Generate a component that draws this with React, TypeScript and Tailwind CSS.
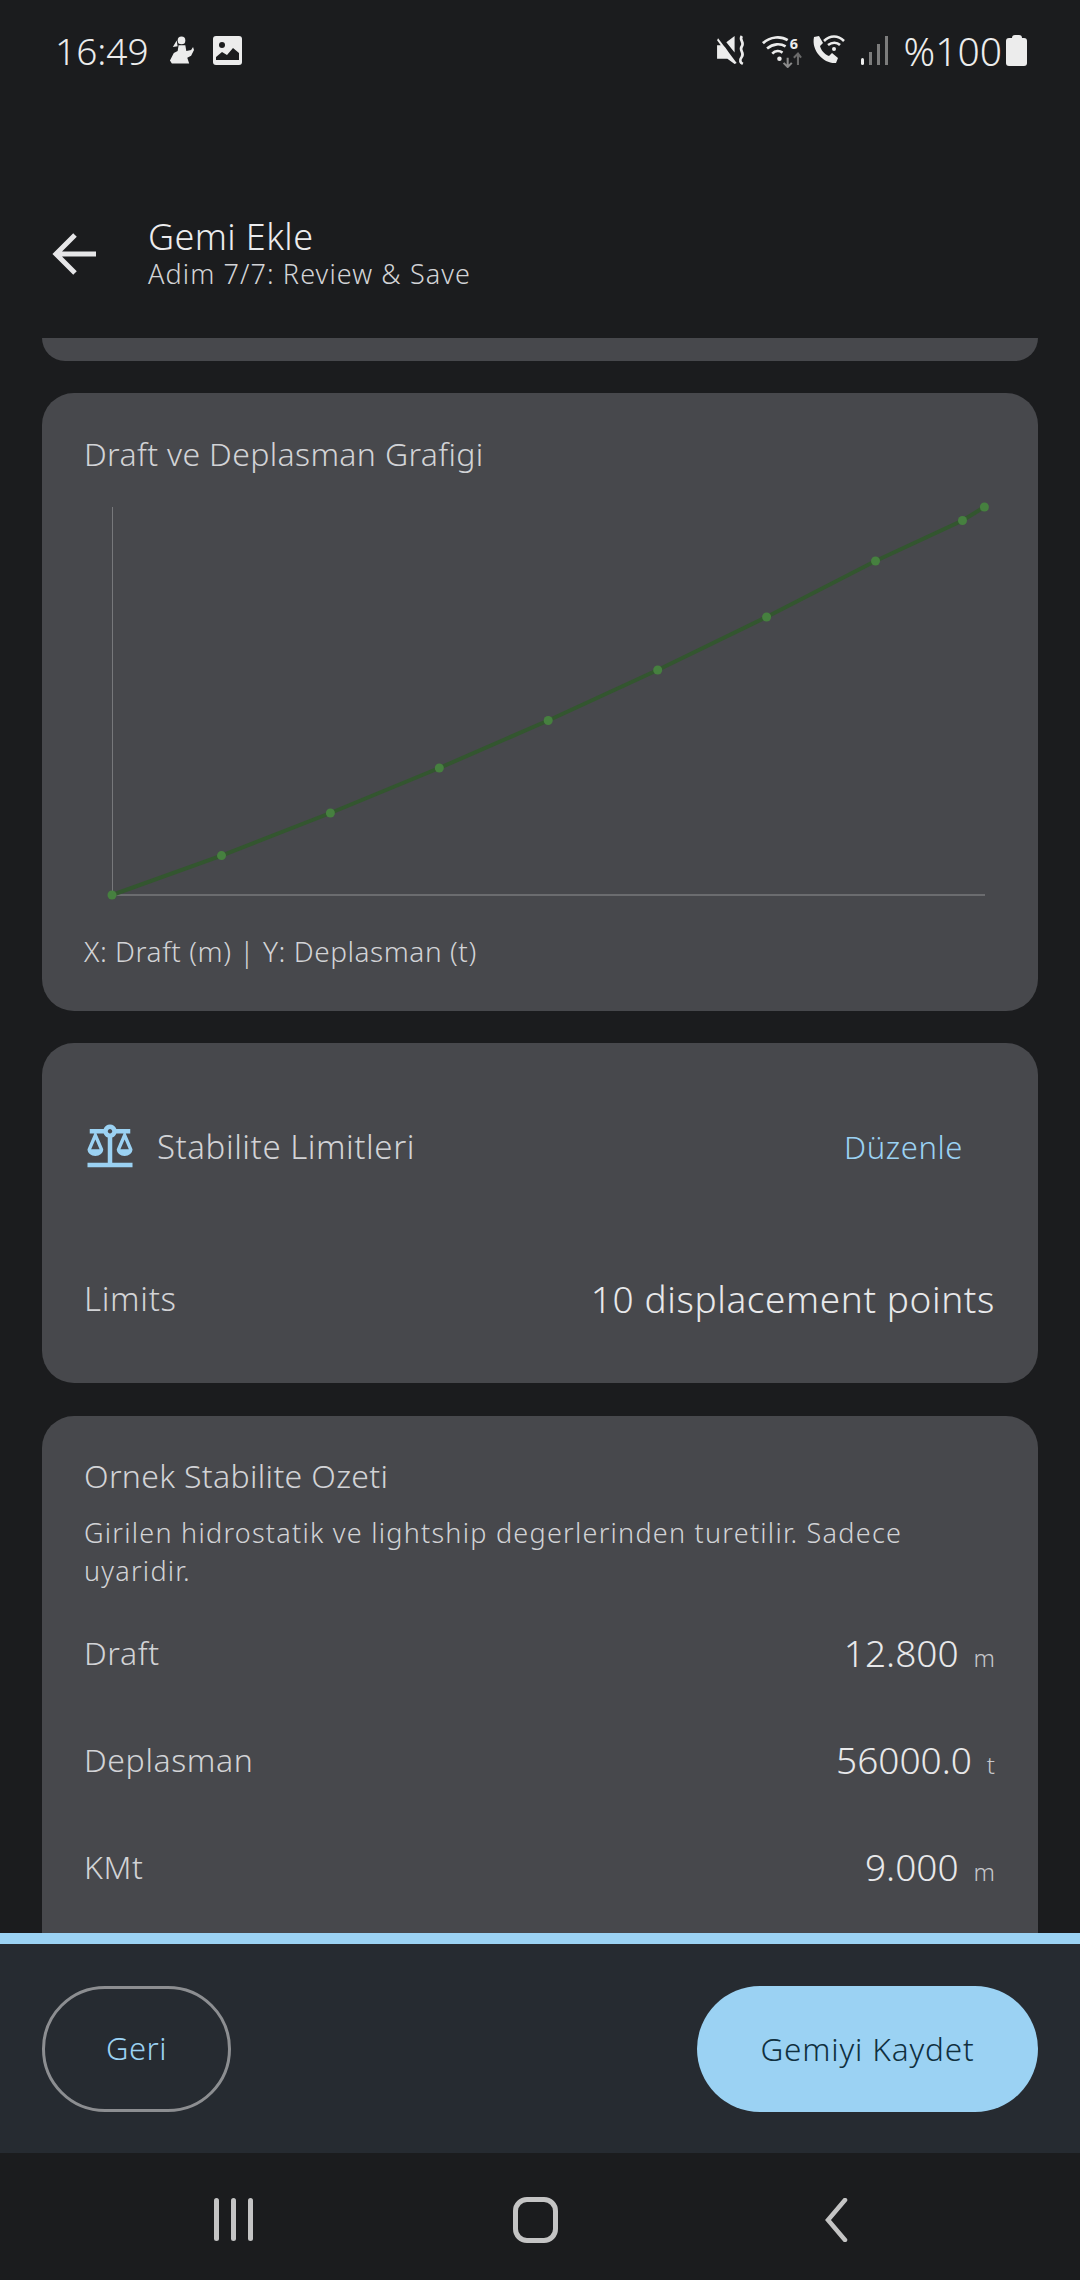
import React from "react";
import { MdBalance } from "react-icons/md";

const font = { fontFamily: '"Noto Sans", sans-serif' };

const points = [
  [0, 388],
  [109.5, 348.6],
  [218.4, 306],
  [327.3, 261],
  [436.2, 213.5],
  [545.7, 163],
  [654.6, 110],
  [763.5, 54],
  [850.5, 13.5],
  [872.4, 0],
];

const StatusBar = () => (
  <div className="flex h-[100px] shrink-0 items-center justify-between pl-[55px] pr-[53px]">
    <div className="flex items-center">
      <span className="text-[37px] leading-none font-light text-[#ececec]">16:49</span>
      <svg className="ml-[20px]" width="25" height="30" viewBox="0 0 26 30" fill="#ececec">
        <circle cx="13" cy="5" r="4" />
        <path d="M8 5 4 12l5-1zM10 10h7l1 6 5-1 2-3 1 3-3 6-4 2 2 6H3l-2-3 4-8 4-2z" />
      </svg>
      <svg className="ml-[19px] mt-[2px]" width="30" height="30" viewBox="0 0 30 30">
        <rect width="29" height="29" rx="3" fill="#ececec" />
        <circle cx="9" cy="9" r="3" fill="#1b1c1e" />
        <path d="M3 24v-3l6-5 5 3 6-7 6 5v7z" fill="#1b1c1e" />
      </svg>
    </div>
    <div className="flex items-center">
      <svg width="33" height="33" viewBox="0 0 30 32" fill="#ececec">
        <path d="M1 11h6l2 2 9 13v3l-7-5H1zM10 8l8-6v16zM2 4l18 24-2 1L1 6z" />
        <path d="M25 2c-3 4 3 6 0 10s3 6 0 10-1 6 1 7" fill="none" stroke="#ececec" strokeWidth="2.6" />
      </svg>
      <svg className="ml-[13px]" width="41" height="35" viewBox="0 0 38 34" fill="none">
        <path d="M1 10c7-7 18-7 24-3M5 15c6-5 13-5 18-2M10 20c3-3 7-3 10-1" stroke="#ececec" strokeWidth="2.6" />
        <circle cx="17" cy="25" r="2.2" fill="#ececec" />
        <text x="27" y="16" fontSize="14" fontWeight="700" fill="#ececec">6</text>
        <path d="M25 24v9M21 29l4 4 4-4" stroke="#8b8b8b" strokeWidth="2" />
        <path d="M35 31v-11M31 24l4-4 3 4" stroke="#6a6a6a" strokeWidth="2" />
      </svg>
      <svg className="ml-[9px]" width="34" height="30" viewBox="0 0 34 30" fill="none">
        <path d="M3 2 8 1l4 7-3 3c1 4 4 8 9 10l3-3 6 5-2 5c-12 1-25-12-22-26z" fill="#ececec" />
        <path d="M13 6c6-6 14-6 20 0M17 10c4-3 9-3 12 0" stroke="#ececec" strokeWidth="2.6" />
        <circle cx="23" cy="14" r="2" fill="#ececec" />
      </svg>
      <div className="ml-[16px] flex h-[30px] items-end gap-[5px]">
        <div className="h-[7px] w-[3px] rounded-full bg-[#ececec]" />
        <div className="h-[13px] w-[3px] bg-[#7c7c7c]" />
        <div className="h-[21px] w-[3px] bg-[#7c7c7c]" />
        <div className="h-[29px] w-[3px] bg-[#7c7c7c]" />
      </div>
      <span className="ml-[16px] text-[39px] leading-none font-light text-[#ececec]">%100</span>
      <div className="ml-[4px] flex flex-col items-center">
        <div className="h-[3px] w-[10px] rounded-t-sm bg-[#ececec]" />
        <div className="h-[28px] w-[21px] rounded-[3px] bg-[#ececec]" />
      </div>
    </div>
  </div>
);

const Row = ({ label, value, unit }: { label: string; value: string; unit: string }) => (
  <div className="flex h-[107px] items-center justify-between">
    <span className="text-[32px] font-light tracking-[0.6px] text-[#d2d3d6]">{label}</span>
    <div className="flex items-baseline gap-[15px]">
      <span className="text-[37px] font-light text-[#e8e8ea]">{value}</span>
      <span className="text-[24px] font-light text-[#c6c7cb]">{unit}</span>
    </div>
  </div>
);

export default function App() {
  return (
    <div className="flex h-[2280px] w-[1080px] flex-col overflow-hidden bg-[#1b1c1e]" style={font}>
      <StatusBar />

      <div className="flex h-[238px] shrink-0 items-start pt-[115px]">
        <svg className="ml-[52px] mt-[17px]" width="44" height="44" viewBox="0 0 44 44" fill="none" stroke="#e6e6e8" strokeWidth="5">
          <path d="M44 22H4M23 3 4 22l19 19" />
        </svg>
        <div className="ml-[52px]">
          <div className="text-[36px] leading-[44px] font-light tracking-[0.4px] text-[#ececee]">Gemi Ekle</div>
          <div className="text-[27px] leading-[30px] font-light tracking-[1.1px] text-[#d2d3d6]">Adim 7/7: Review &amp; Save</div>
        </div>
      </div>

      <div className="min-h-0 flex-1 overflow-hidden px-[42px]">
        <div className="h-[23px] rounded-b-[26px] bg-[#47484c]" />

        <div className="mt-[32px] h-[618px] rounded-[32px] bg-[#47484c] px-[42px] pt-[40px]">
          <div className="text-[32px] leading-[42px] font-light tracking-[0.35px] text-[#d2d3d6]">Draft ve Deplasman Grafigi</div>
          <div className="ml-[28px] mt-[32px] h-[389px] w-[873px]">
            <svg className="overflow-visible" width="873" height="389" viewBox="0 0 873 389" fill="none">
              <path d="M0.5 0V388" stroke="#77787b" strokeWidth="1" />
              <path d="M0 388H873" stroke="#77787b" strokeWidth="1.5" />
              <polyline points={points.map((p) => p.join(",")).join(" ")} stroke="#33562f" strokeWidth="4" />
              {points.map(([x, y]) => (
                <circle key={x} cx={x} cy={y} r="4.5" fill="#46803f" />
              ))}
            </svg>
          </div>
          <div className="mt-[37px] text-[28px] leading-[36px] font-light tracking-[0.55px] text-[#d2d3d6]">X: Draft (m) | Y: Deplasman (t)</div>
        </div>

        <div className="mt-[32px] h-[340px] rounded-[32px] bg-[#47484c] px-[42px]">
          <div className="flex h-[208px] items-center">
            <MdBalance size={54} className="-ml-[1px] text-[#9bd2f3]" />
            <span className="ml-[20px] text-[33px] font-light tracking-[0.55px] text-[#d2d3d6]">Stabilite Limitleri</span>
            <span className="ml-auto mr-[33px] text-[31px] font-light tracking-[0.6px] text-[#9bd2f3]">Düzenle</span>
          </div>
          <div className="mt-[20px] flex items-center justify-between pr-[1px]">
            <span className="text-[33px] font-light tracking-[0.7px] text-[#d2d3d6]">Limits</span>
            <span className="text-[37px] font-light tracking-[0.6px] text-[#e8e8ea]">10 displacement points</span>
          </div>
        </div>

        <div className="mt-[33px] h-[560px] rounded-t-[32px] bg-[#47484c] px-[42px] pt-[40px]">
          <div className="text-[32px] leading-[40px] font-light tracking-[0.33px] text-[#d2d3d6]">Ornek Stabilite Ozeti</div>
          <div className="mt-[18px] pr-[40px] text-[27px] leading-[38px] font-light tracking-[1.25px] text-[#d2d3d6]">
            Girilen hidrostatik ve lightship degerlerinden turetilir. Sadece uyaridir.
          </div>
          <div className="mt-[9px] pr-[1px]">
            <Row label="Draft" value="12.800" unit="m" />
            <Row label="Deplasman" value="56000.0" unit="t" />
            <Row label="KMt" value="9.000" unit="m" />
          </div>
        </div>
      </div>

      <div className="h-[11px] shrink-0 bg-[#9bd2f3]" />
      <div className="flex h-[209px] shrink-0 items-center justify-between bg-[#262b31] px-[42px]">
        <button className="h-[126px] w-[189px] rounded-[63px] border-[3px] border-[#8c8e91] text-[31px] font-light tracking-[0.5px] text-[#9bd2f3]">Geri</button>
        <button className="h-[126px] w-[341px] rounded-[63px] bg-[#9bd2f3] text-[31.5px] font-light tracking-[0.85px] text-[#10303f]">Gemiyi Kaydet</button>
      </div>

      <div className="flex h-[127px] shrink-0 items-center pt-[6px]">
        <div className="ml-[214px] flex h-[43px] gap-[12px]">
          <div className="w-[5px] rounded-full bg-[#c4c4c4]" />
          <div className="w-[5px] rounded-full bg-[#c4c4c4]" />
          <div className="w-[5px] rounded-full bg-[#c4c4c4]" />
        </div>
        <div className="ml-[260px] h-[46px] w-[45px] rounded-[14px] border-[5px] border-[#c4c4c4]" />
        <svg className="ml-[264px]" width="26" height="44" viewBox="0 0 26 44" fill="none" stroke="#c4c4c4" strokeWidth="4.5" strokeLinecap="round">
          <path d="M23 2 6 22l17 20" />
        </svg>
      </div>
    </div>
  );
}
